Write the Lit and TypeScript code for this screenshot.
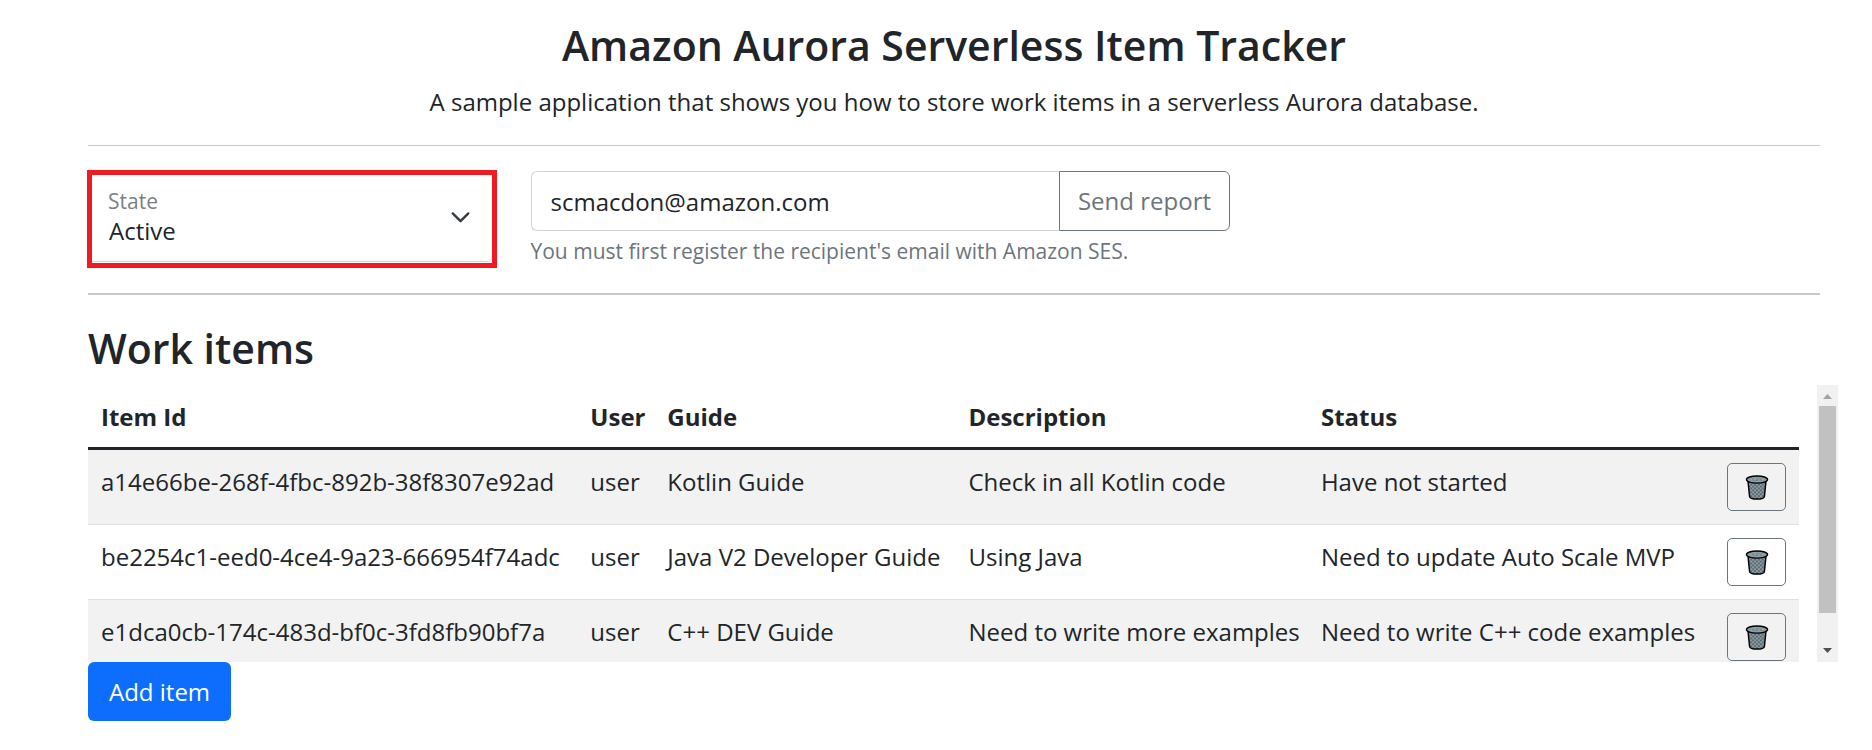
import { LitElement, html, css } from "lit";
import { customElement, state } from "lit/decorators.js";

interface WorkItem {
  id: string;
  user: string;
  guide: string;
  description: string;
  status: string;
}

const ITEMS: WorkItem[] = [
  {
    id: "a14e66be-268f-4fbc-892b-38f8307e92ad",
    user: "user",
    guide: "Kotlin Guide",
    description: "Check in all Kotlin code",
    status: "Have not started",
  },
  {
    id: "be2254c1-eed0-4ce4-9a23-666954f74adc",
    user: "user",
    guide: "Java V2 Developer Guide",
    description: "Using Java",
    status: "Need to update Auto Scale MVP",
  },
  {
    id: "e1dca0cb-174c-483d-bf0c-3fd8fb90bf7a",
    user: "user",
    guide: "C++ DEV Guide",
    description: "Need to write more examples",
    status: "Need to write C++ code examples",
  },
];

@customElement("trash-icon")
export class TrashIcon extends LitElement {
  static styles = css`
    :host {
      display: block;
      width: 24px;
      height: 25px;
    }
    svg {
      display: block;
      width: 100%;
      height: 100%;
    }
  `;

  render() {
    return html`
      <svg viewBox="0 0 24 26" aria-hidden="true">
        <defs>
          <pattern id="mesh" width="4" height="4" patternUnits="userSpaceOnUse">
            <path d="M0 0L4 4M4 0L0 4" stroke="#4d5d65" stroke-width="0.8" fill="none" />
          </pattern>
        </defs>
        <path d="M2.6 6L4.3 22.4C4.6 24.3 8 25 12 25s7.4-.7 7.7-2.6L21.4 6z" fill="#8c9da4" />
        <path
          d="M2.6 6L4.3 22.4C4.6 24.3 8 25 12 25s7.4-.7 7.7-2.6L21.4 6z"
          fill="url(#mesh)"
          stroke="#000"
          stroke-width="1.5"
        />
        <ellipse cx="12" cy="4.7" rx="11" ry="3.7" fill="#8c9da4" stroke="#000" stroke-width="1.4" />
        <path d="M3.5 5C6 3.200 18 3.200 20.500 5C17 6.600 7 6.600 3.500 5z" fill="#74878f" />
        <path d="M5 5h2M9 4.500h2M13 5.200h2M17 4.700h2" stroke="#a5b6bc" stroke-width="1" />
      </svg>
    `;
  }
}

@customElement("app-root")
export class AppRoot extends LitElement {
  @state() private items = ITEMS;

  static styles = css`
    :host {
      display: block;
      padding: 20px 52px 29px 88px;
      background: #fff;
      color: #212529;
      font: 24px/38px "Open Sans", "Noto Sans", sans-serif;
    }
    *,
    *::before,
    *::after {
      box-sizing: border-box;
    }
    h1,
    h2,
    p {
      margin: 0;
    }
    h1,
    h2 {
      font-size: 41px;
      line-height: 50px;
      font-weight: 600;
    }
    header {
      text-align: center;
    }
    header p {
      margin-top: 13px;
    }
    hr {
      margin: 24px 0 25px;
      border: 0;
      border-top: 1px solid #c8c9ca;
    }
    .filters + hr {
      margin: 26px 0 28px;
      border-top-width: 2px;
    }
    button,
    input,
    select {
      font: inherit;
      color: inherit;
      margin: 0;
    }
    .filters {
      display: grid;
      grid-template-columns: repeat(12, 1fr);
      gap: 38px;
    }
    .state {
      grid-column: span 3;
      position: relative;
      height: 91px;
    }
    .state::after {
      content: "";
      position: absolute;
      inset: -1px -4px -6px -1px;
      border: 5px solid #ee1b22;
      pointer-events: none;
    }
    .state label {
      position: absolute;
      left: 20px;
      top: 14px;
      font-size: 21px;
      line-height: 32px;
      color: #7c7f82;
      pointer-events: none;
    }
    .state select {
      width: 100%;
      height: 100%;
      padding: 28px 56px 0 20px;
      border: 1px solid #ced4da;
      border-radius: 6px;
      background: #fff;
      appearance: none;
    }
    .chevron {
      position: absolute;
      right: 20px;
      top: 33px;
      width: 25px;
      height: 25px;
      pointer-events: none;
    }
    .email {
      grid-column: span 5;
    }
    .group {
      display: flex;
    }
    .group input {
      flex: 1;
      min-width: 0;
      height: 60px;
      padding: 0 19px;
      border: 1px solid #ced4da;
      border-right: 0;
      border-radius: 6px 0 0 6px;
    }
    .group button {
      padding: 0 18px;
      border: 1px solid #6c757d;
      border-radius: 0 6px 6px 0;
      background: #fff;
      color: #6c757d;
    }
    .hint {
      margin-top: 4px;
      font-size: 21px;
      line-height: 32px;
      color: #6c757d;
    }
    .scroller {
      display: grid;
      grid-template-columns: 1fr 21px;
      gap: 18px;
      height: 277px;
      margin-top: 12px;
      margin-right: -18px;
    }
    .viewport {
      overflow: auto;
      scrollbar-width: none;
    }
    table {
      width: 100%;
      margin-bottom: 25px;
      table-layout: fixed;
      border-collapse: collapse;
      white-space: nowrap;
    }
    .c-id { width: 28.6%; }
    .c-user { width: 4.5%; }
    .c-guide { width: 17.6%; }
    .c-desc { width: 20.6%; }
    .c-status { width: 23.7%; }
    th,
    td {
      padding: 13px;
      text-align: left;
      vertical-align: top;
    }
    th {
      padding-bottom: 11px;
      font-weight: 700;
    }
    thead {
      border-bottom: 3px solid #212529;
    }
    td {
      border-bottom: 1px solid #dee2e6;
    }
    td:first-child,
    td:nth-child(2) {
      padding-right: 0;
    }
    tbody tr:nth-child(odd) {
      background: #f2f2f2;
    }
    td:last-child {
      padding-left: 0;
    }
    .remove {
      display: flex;
      align-items: center;
      justify-content: center;
      width: 59px;
      height: 48px;
      margin-left: auto;
      padding: 0;
      border: 1px solid #6c757d;
      border-radius: 5px;
      background: transparent;
    }
    .bar {
      display: flex;
      flex-direction: column;
      background: #f1f1f1;
    }
    .bar svg {
      display: block;
      width: 21px;
      height: 21px;
    }
    .track {
      flex: 1;
      padding: 0 2px;
    }
    .thumb {
      height: 88%;
      background: #c1c1c1;
    }
    .add {
      display: block;
      height: 59px;
      padding: 0 21px;
      border: 0;
      border-radius: 6px;
      background: #0d6efd;
      color: #fff;
    }
  `;

  private remove(id: string) {
    this.items = this.items.filter((item) => item.id !== id);
  }

  render() {
    return html`
      <header>
        <h1>Amazon Aurora Serverless Item Tracker</h1>
        <p>A sample application that shows you how to store work items in a serverless Aurora database.</p>
      </header>
      <hr />
      <section class="filters">
        <div class="state">
          <select id="state">
            <option>Active</option>
            <option>Archived</option>
          </select>
          <label for="state">State</label>
          <svg class="chevron" viewBox="0 0 16 16" aria-hidden="true">
            <path
              d="M3 6l5 5 5-5"
              fill="none"
              stroke="#343a40"
              stroke-width="1.5"
              stroke-linecap="round"
              stroke-linejoin="round"
            />
          </svg>
        </div>
        <div class="email">
          <div class="group">
            <input type="email" value="scmacdon@amazon.com" aria-label="Recipient's email" aria-describedby="hint" />
            <button type="button">Send report</button>
          </div>
          <p class="hint" id="hint">You must first register the recipient's email with Amazon SES.</p>
        </div>
      </section>
      <hr />
      <main>
        <h2>Work items</h2>
        <div class="scroller">
          <div class="viewport">
            <table>
              <colgroup>
                <col class="c-id" />
                <col class="c-user" />
                <col class="c-guide" />
                <col class="c-desc" />
                <col class="c-status" />
                <col />
              </colgroup>
              <thead>
                <tr>
                  <th>Item Id</th>
                  <th>User</th>
                  <th>Guide</th>
                  <th>Description</th>
                  <th>Status</th>
                  <th></th>
                </tr>
              </thead>
              <tbody>
                ${this.items.map(
                  (item) => html`
                    <tr>
                      <td>${item.id}</td>
                      <td>${item.user}</td>
                      <td>${item.guide}</td>
                      <td>${item.description}</td>
                      <td>${item.status}</td>
                      <td>
                        <button
                          class="remove"
                          type="button"
                          aria-label="Delete item"
                          @click=${() => this.remove(item.id)}
                        >
                          <trash-icon></trash-icon>
                        </button>
                      </td>
                    </tr>
                  `
                )}
              </tbody>
            </table>
          </div>
          <div class="bar" aria-hidden="true">
            <svg viewBox="0 0 21 21"><path d="M6 14l4.5-5 4.5 5z" fill="#a3a3a3" /></svg>
            <div class="track"><div class="thumb"></div></div>
            <svg viewBox="0 0 21 21"><path d="M6 7l4.5 5L15 7z" fill="#505050" /></svg>
          </div>
        </div>
        <button class="add" type="button">Add item</button>
      </main>
    `;
  }
}
